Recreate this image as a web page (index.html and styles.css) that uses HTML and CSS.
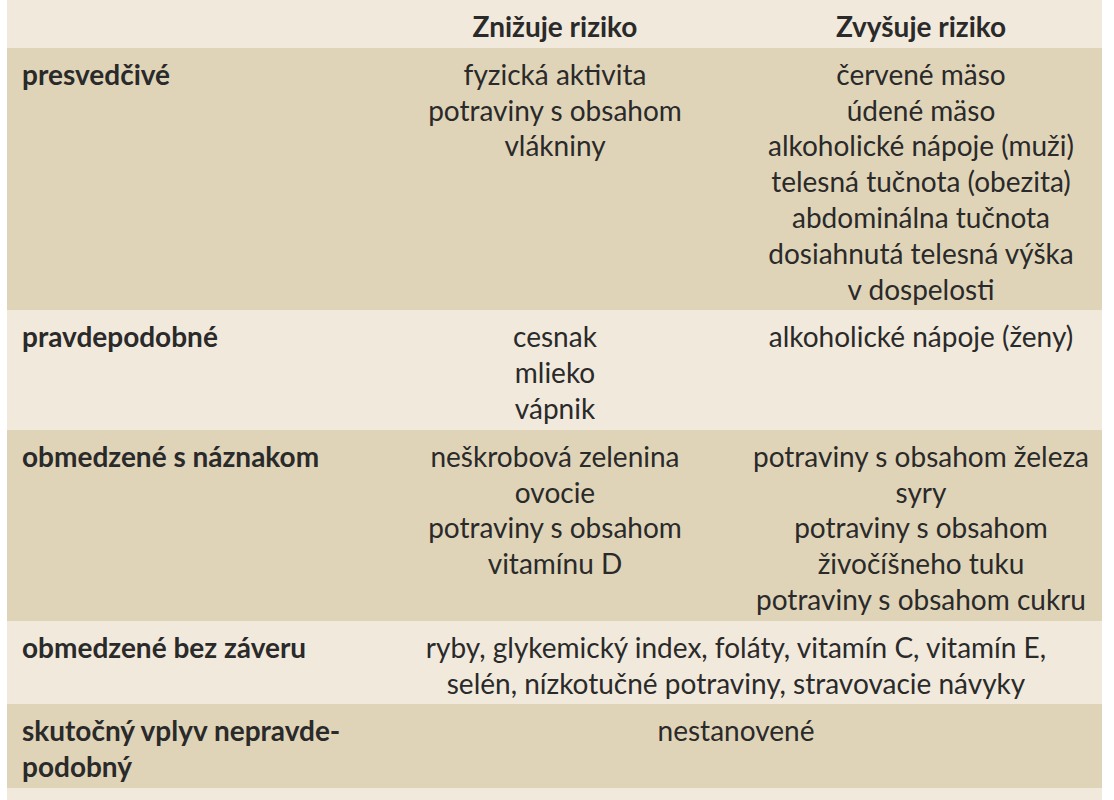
FILE: index.html
```html
<!DOCTYPE html>
<html lang="sk">
<head>
<meta charset="utf-8">
<title>Riziko</title>
<link rel="stylesheet" href="styles.css">
</head>
<body>
<table class="risk">
  <colgroup>
    <col class="c1"><col class="c2"><col class="c3">
  </colgroup>
  <thead>
    <tr class="light">
      <th class="label"></th>
      <th>Znižuje riziko</th>
      <th>Zvyšuje riziko</th>
    </tr>
  </thead>
  <tbody>
    <tr class="dark">
      <td class="label">presvedčivé</td>
      <td>fyzická aktivita<br>potraviny s obsahom<br>vlákniny</td>
      <td>červené mäso<br>údené mäso<br>alkoholické nápoje (muži)<br>telesná tučnota (obezita)<br>abdominálna tučnota<br>dosiahnutá telesná výška<br>v dospelosti</td>
    </tr>
    <tr class="light">
      <td class="label">pravdepodobné</td>
      <td>cesnak<br>mlieko<br>vápnik</td>
      <td>alkoholické nápoje (ženy)</td>
    </tr>
    <tr class="dark">
      <td class="label">obmedzené s náznakom</td>
      <td>neškrobová zelenina<br>ovocie<br>potraviny s obsahom<br>vitamínu D</td>
      <td>potraviny s obsahom železa<br>syry<br>potraviny s obsahom<br>živočíšneho tuku<br>potraviny s obsahom cukru</td>
    </tr>
    <tr class="light">
      <td class="label">obmedzené bez záveru</td>
      <td colspan="2">ryby, glykemický index, foláty, vitamín C, vitamín E,<br>selén, nízkotučné potraviny, stravovacie návyky</td>
    </tr>
    <tr class="dark">
      <td class="label">skutočný vplyv nepravde-<br>podobný</td>
      <td colspan="2">nestanovené</td>
    </tr>
    <tr class="light">
      <td class="label">&nbsp;</td>
      <td colspan="2">&nbsp;</td>
    </tr>
  </tbody>
</table>
</body>
</html>
```
FILE: styles.css
```css
html, body {
  margin: 0;
  padding: 0;
  background: #ffffff;
}
body {
  font-family: Lato, "Open Sans", sans-serif;
  color: #2a2a2a;
}
.risk {
  margin-left: 7px;
  width: 1095px;
  border-collapse: collapse;
  table-layout: fixed;
}
.c1 { width: 363px; }
.c2 { width: 370px; }
.c3 { width: 362px; }
.risk th,
.risk td {
  font-size: 28px;
  line-height: 35.8px;
  padding: 9px 8px 3px;
  text-align: center;
  vertical-align: top;
  font-weight: 400;
  white-space: nowrap;
}
.risk th {
  font-weight: 700;
}
.risk .label {
  text-align: left;
  padding-left: 15px;
  font-weight: 700;
}
.light { background: #f1e9dc; }
.dark { background: #e0d4b8; }
```
